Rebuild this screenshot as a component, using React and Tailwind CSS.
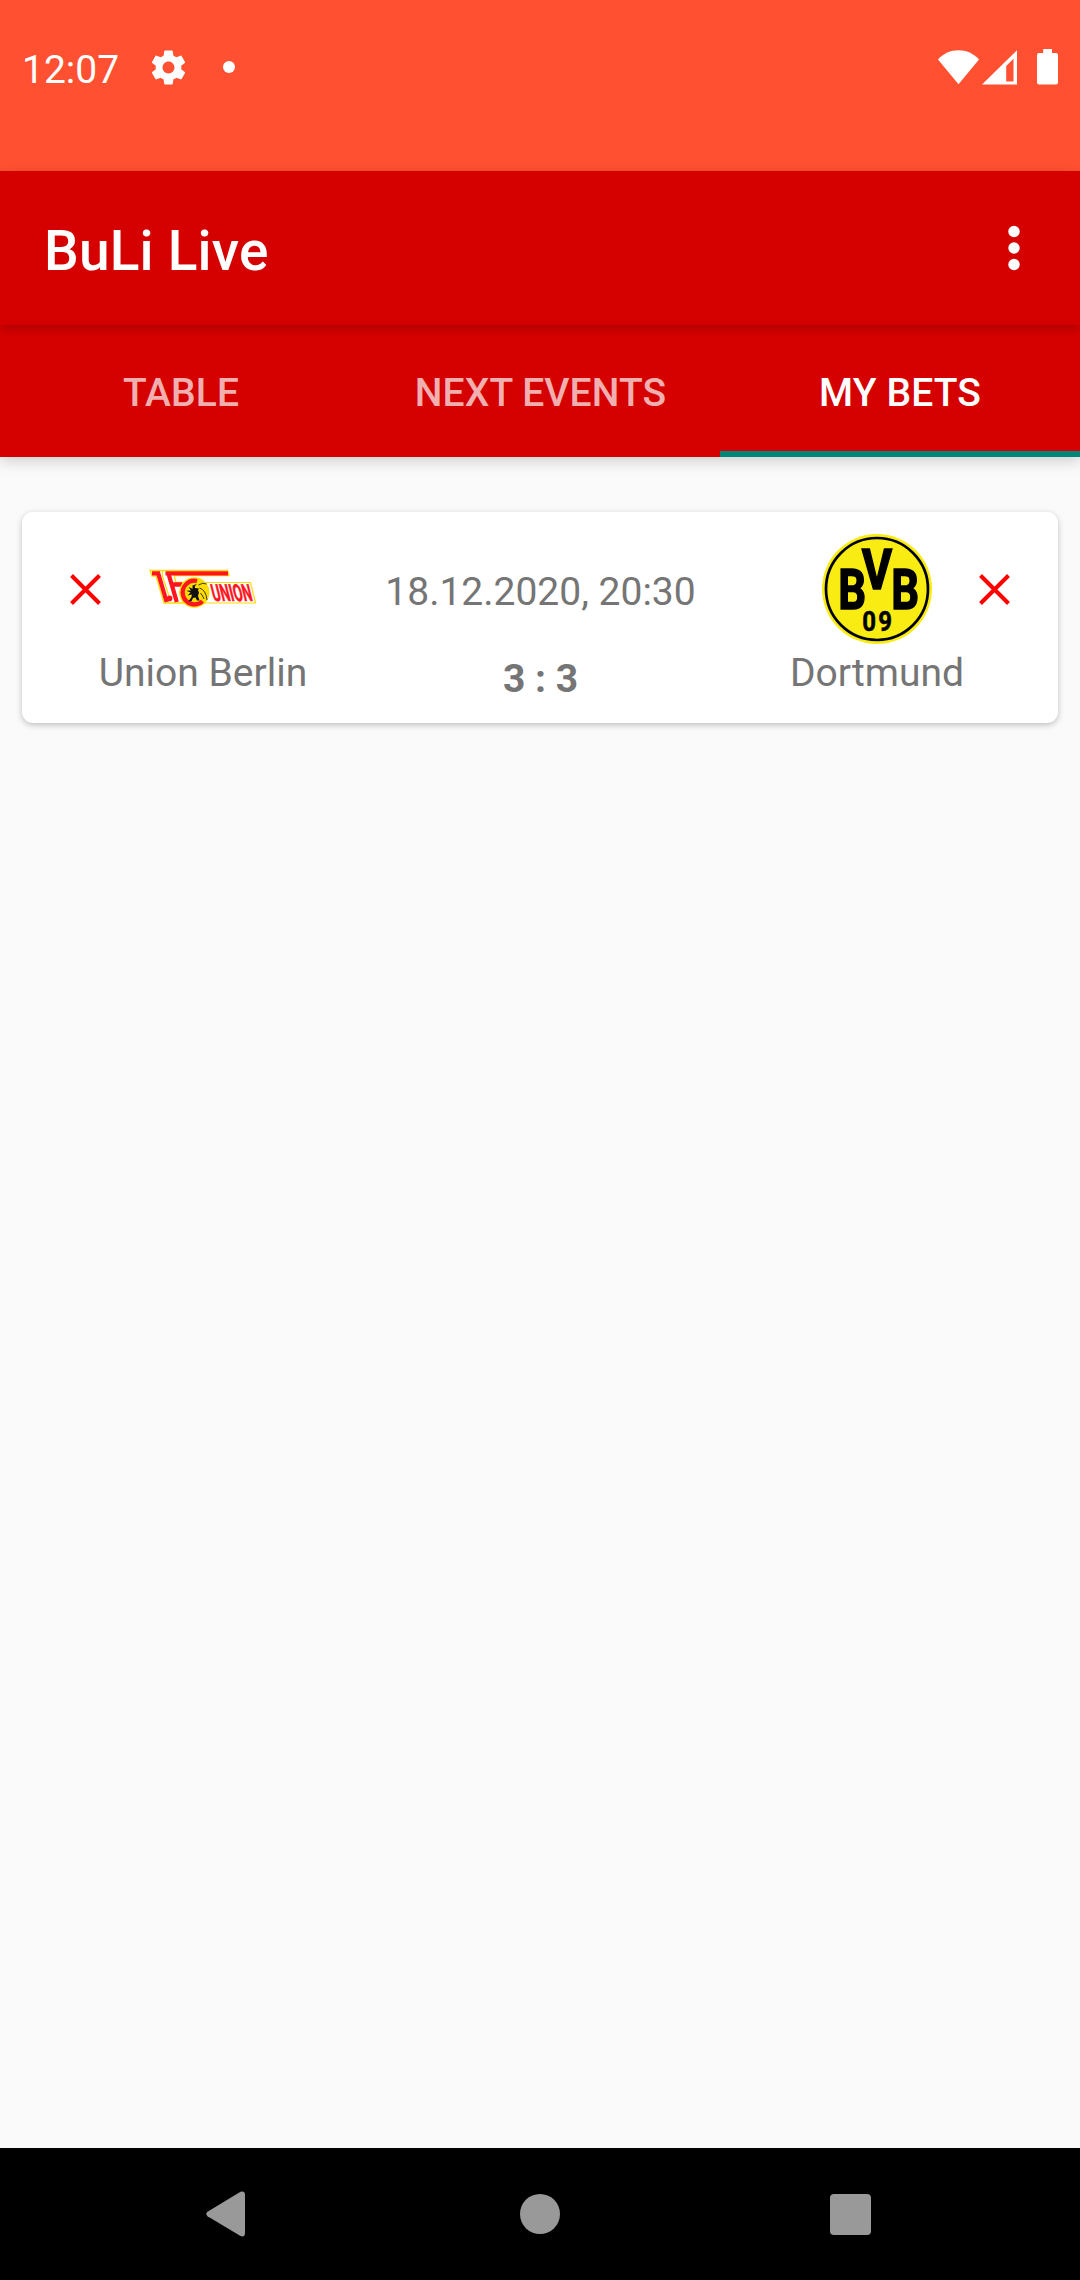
function StatusBar() {
  return (
    <div className="flex h-[171px] shrink-0 items-start justify-between bg-[#ff5131] text-white">
      <div className="flex items-start pt-[47px] pl-[22px]">
        <span className="w-[126px] text-[39px] leading-[46px]">12:07</span>
        <svg className="h-[41px] w-[41px]" viewBox="0 0 24 24" fill="currentColor">
          <path d="M19.43 12.98c.04-.32.07-.64.07-.98s-.03-.66-.07-.98l2.11-1.65c.19-.15.24-.42.12-.64l-2-3.46c-.12-.22-.39-.3-.61-.22l-2.49 1c-.52-.4-1.08-.73-1.69-.98l-.38-2.65C14.46 2.18 14.25 2 14 2h-4c-.25 0-.46.18-.49.42l-.38 2.65c-.61.25-1.17.59-1.69.98l-2.49-1c-.23-.09-.49 0-.61.22l-2 3.46c-.13.22-.07.49.12.64l2.11 1.65c-.04.32-.07.65-.07.98s.03.66.07.98l-2.11 1.65c-.19.15-.24.42-.12.64l2 3.46c.12.22.39.3.61.22l2.49-1c.52.4 1.08.73 1.69.98l.38 2.65c.03.24.24.42.49.42h4c.25 0 .46-.18.49-.42l.38-2.65c.61-.25 1.17-.59 1.69-.98l2.49 1c.23.09.49 0 .61-.22l2-3.46c.12-.22.07-.49-.12-.64l-2.11-1.65zM12 15.5c-1.93 0-3.5-1.57-3.5-3.5s1.57-3.5 3.5-3.5 3.5 1.57 3.5 3.5-1.57 3.5-3.5 3.5z" />
        </svg>
        <span className="mt-[14px] ml-[34px] h-3 w-3 rounded-full bg-white" />
      </div>
      <div className="flex items-start pt-[49px] pr-[22px]">
        <svg className="h-9 w-[41px]" viewBox="0 0 41 36" fill="currentColor">
          <path d="M20.5 35.3L0 10.4C5.5 4.500 12.500 1.300 20.500 1.300S35.500 4.500 41 10.400Z" />
        </svg>
        <svg className="ml-[3px] h-9 w-[35px]" viewBox="0 0 35 36" fill="currentColor" fillRule="evenodd">
          <path d="M35 1.200V35.600H0ZM24.200 17V32.500H31.500V9.800Z" />
        </svg>
        <svg className="ml-5 h-9 w-[21px]" viewBox="0 0 21 36" fill="currentColor">
          <path d="M6.200 0H15V4H19Q21 4 21 6V33.600Q21 35.600 19 35.600H2Q0 35.600 0 33.600V6Q0 4 2 4H6.200Z" />
        </svg>
      </div>
    </div>
  );
}

function Toolbar() {
  return (
    <header className="relative z-10 flex h-[154px] shrink-0 items-center justify-between bg-[#d50000] pr-[60px] pl-11 text-white shadow-[0_3px_10px_rgba(0,0,0,0.2)]">
      <h1 className="pt-[6px] text-[55px] leading-[64px] font-medium tracking-[0.2px]">BuLi Live</h1>
      <svg className="h-[46px] w-3" viewBox="0 0 12 46" fill="currentColor">
        <circle cx="6" cy="6.500" r="5.700" />
        <circle cx="6" cy="23" r="5.700" />
        <circle cx="6" cy="39.500" r="5.700" />
      </svg>
    </header>
  );
}

function Tabs() {
  return (
    <nav className="grid h-[132px] shrink-0 grid-cols-3 bg-[#d50000] text-[39px] leading-[46px] font-medium tracking-[0.1px] text-white/70 shadow-[0_4px_14px_rgba(0,0,0,0.18)]">
      <div className="flex items-center justify-center pt-1 pl-[2px]">TABLE</div>
      <div className="flex items-center justify-center pt-1 pl-px">NEXT EVENTS</div>
      <div className="flex items-center justify-center border-b-[6px] border-[#018577] pt-[10px] text-white">MY BETS</div>
    </nav>
  );
}

function Cross() {
  return (
    <svg className="mt-[62px] h-[31px] w-[31px] shrink-0" viewBox="0 0 31 31" stroke="#ff0000" strokeWidth="4">
      <path d="M1.500 1.500L29.500 29.500M29.500 1.500L1.500 29.500" />
    </svg>
  );
}

function UnionLogo() {
  return (
    <svg className="h-[110px] w-[110px] overflow-visible" viewBox="0 -34 110 110">
      <path d="M2 2.500H79.500L81 7.500H26L28 14.500H36L40 35H16L8 8H4Z" fill="#fff" stroke="#ffdc00" strokeWidth="1.300" />
      <path d="M14.300 3V8L21 28" fill="none" stroke="#ffdc00" strokeWidth="1.200" />
      <g fill="none" stroke="#ff1420" strokeWidth="4.300">
        <path d="M4 5.300H12M9.800 4L18.700 34" />
        <path d="M17.500 5.300H80M20 4L28.800 34M24 16.500H34" />
      </g>
      <circle cx="21.600" cy="30.400" r="2.800" fill="#ff1420" />
      <path d="M54 14.500H102.500L107.500 35H54Z" fill="#fff" stroke="#ffdc00" strokeWidth="1.200" />
      <circle cx="46.300" cy="24.500" r="15.200" fill="#ffdc00" />
      <path d="M49 13A11.800 11.800 0 1 0 54.500 33.200" fill="none" stroke="#ff1420" strokeWidth="4.200" />
      <path d="M49 16L46.800 18.200L47 20L51 20.600L50 22.300L51 24.500L50 28L51.600 32.500H49L47.500 29.500L45 30L43.500 33.200H40.500L43.500 29L43.800 26.500L39.500 27.500L42.500 24.500L38.300 22.800L43 22.400L40.500 19L44.600 20.800L44.500 17.500Z" fill="#111" />
      <path d="M50.500 17Q55 14 58.500 16M51.500 20Q58 22 59 32M52.500 25Q55 28 56 31" fill="none" stroke="#222" strokeWidth=".9" />
      <text
        transform="translate(65.500 33) skewX(14) scale(.56 1)"
        fontFamily="Roboto, sans-serif"
        fontWeight="700"
        fontSize="23.500"
        fill="#ff1420"
        stroke="#ff1420"
        strokeWidth=".5"
      >
        UNION
      </text>
    </svg>
  );
}

function DortmundLogo() {
  return (
    <svg className="h-[110px] w-[110px]" viewBox="0 0 110 110" fontFamily="Roboto, sans-serif" fontWeight="700" textAnchor="middle">
      <circle cx="55" cy="55" r="55" fill="#f9ec12" />
      <circle cx="55" cy="55" r="51" fill="none" stroke="#000" strokeWidth="2.700" />
      <g fontSize="56" stroke="#000" strokeWidth="1.500">
        <text transform="translate(30.300 74.500) scale(.78 1)">B</text>
        <text transform="translate(55 54.500) scale(.83 1)">V</text>
        <text transform="translate(83.300 74.500) scale(.78 1)">B</text>
      </g>
      <g fontSize="28.500" stroke="#000" strokeWidth=".6">
        <text transform="translate(47 96.500) scale(.84 1)">0</text>
        <text transform="translate(63 96.500) scale(.84 1)">9</text>
      </g>
    </svg>
  );
}

function Team({ logo, name }) {
  return (
    <div className="flex w-[204px] shrink-0 flex-col items-center gap-[6px] pt-[22px]">
      {logo}
      <span className="whitespace-nowrap">{name}</span>
    </div>
  );
}

function BetCard() {
  return (
    <section className="mx-[22px] mt-[55px] flex h-[211px] items-start rounded-[11px] bg-white px-12 text-[39px] leading-[46px] text-[#757575] shadow-[0_2px_6px_rgba(0,0,0,0.24)]">
      <Cross />
      <Team logo={<UnionLogo />} name="Union Berlin" />
      <div className="flex flex-1 flex-col items-center gap-[41px] pt-[57px] pl-px">
        <span className="whitespace-nowrap">18.12.2020, 20:30</span>
        <span className="font-bold">3 : 3</span>
      </div>
      <Team logo={<DortmundLogo />} name="Dortmund" />
      <Cross />
    </section>
  );
}

function NavigationBar() {
  return (
    <footer className="flex h-[132px] shrink-0 items-center justify-between bg-black pr-[209px] pl-[206px]">
      <svg className="h-[46px] w-[39px]" viewBox="0 0 39 46" fill="#999">
        <path d="M34.500 .8Q39 -.8 39 4V42Q39 46.500 34.500 45L1.500 25.200Q-1 23 1.500 20.800Z" />
      </svg>
      <span className="ml-[5px] h-10 w-10 rounded-full bg-[#999]" />
      <span className="h-[41px] w-[41px] rounded-[4px] bg-[#999]" />
    </footer>
  );
}

export default function App() {
  return (
    <div className="flex h-[2280px] w-[1080px] flex-col overflow-hidden bg-[#fafafa] font-['Roboto',sans-serif]">
      <StatusBar />
      <Toolbar />
      <Tabs />
      <main className="flex-1">
        <BetCard />
      </main>
      <NavigationBar />
    </div>
  );
}
